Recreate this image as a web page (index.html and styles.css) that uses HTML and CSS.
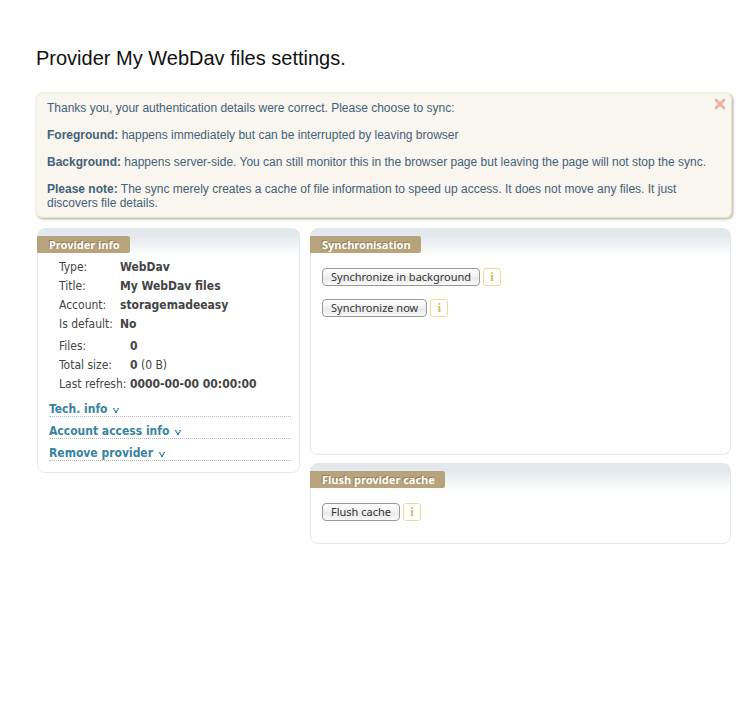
FILE: index.html
```html
<!DOCTYPE html>
<html lang="en">
<head>
    <meta charset="UTF-8">
    <meta name="viewport" content="width=device-width, initial-scale=1.0">
    <title>Provider settings</title>
    <link rel="stylesheet" href="styles.css">
</head>
<body>
    <h1>Provider My WebDav files settings.</h1>

    <div class="message">
        <button class="close" type="button" aria-label="Close">
            <svg width="12" height="12" viewBox="0 0 12 12"><path d="M2 2l8 8M10 2l-8 8" stroke="#ebada3" stroke-width="2.6" stroke-linecap="round"/></svg>
        </button>
        <p>Thanks you, your authentication details were correct. Please choose to sync:</p>
        <p><b>Foreground:</b> happens immediately but can be interrupted by leaving browser</p>
        <p><b>Background:</b> happens server-side. You can still monitor this in the browser page but leaving the page will not stop the sync.</p>
        <p><b>Please note:</b> The sync merely creates a cache of file information to speed up access. It does not move any files. It just discovers file details.</p>
    </div>

    <div class="columns">
        <div class="panel info">
            <h2>Provider info</h2>
            <table>
                <tr><th>Type:</th><td><b>WebDav</b></td></tr>
                <tr><th>Title:</th><td><b>My WebDav files</b></td></tr>
                <tr><th>Account:</th><td><b>storagemadeeasy</b></td></tr>
                <tr><th>Is default:</th><td><b>No</b></td></tr>
            </table>
            <table class="stats">
                <tr><th>Files:</th><td><b>0</b></td></tr>
                <tr><th>Total size:</th><td><b>0</b> (0 B)</td></tr>
                <tr><th>Last refresh:</th><td><b>0000-00-00 00:00:00</b></td></tr>
            </table>
            <ul class="more">
                <li><a href="#">Tech. info <svg class="arrow" width="6" height="5" viewBox="0 0 6 5"><path d="M0 0h1.6v1.6H0zM4.4 0H6v1.6H4.4zM1 1.8h1.4v1.4H1zM3.6 1.8H5v1.4H3.6zM2 3.1h2V5H2z"/></svg></a></li>
                <li><a href="#">Account access info <svg class="arrow" width="6" height="5" viewBox="0 0 6 5"><path d="M0 0h1.6v1.6H0zM4.4 0H6v1.6H4.4zM1 1.8h1.4v1.4H1zM3.6 1.8H5v1.4H3.6zM2 3.1h2V5H2z"/></svg></a></li>
                <li><a href="#">Remove provider <svg class="arrow" width="6" height="5" viewBox="0 0 6 5"><path d="M0 0h1.6v1.6H0zM4.4 0H6v1.6H4.4zM1 1.8h1.4v1.4H1zM3.6 1.8H5v1.4H3.6zM2 3.1h2V5H2z"/></svg></a></li>
            </ul>
        </div>

        <div class="actions">
            <div class="panel sync">
                <h2>Synchronisation</h2>
                <div class="row">
                    <button class="btn" type="button">Synchronize in background</button>
                    <a class="hint" href="#">i</a>
                </div>
                <div class="row">
                    <button class="btn" type="button">Synchronize now</button>
                    <a class="hint" href="#">i</a>
                </div>
            </div>
            <div class="panel flush">
                <h2>Flush provider cache</h2>
                <div class="row">
                    <button class="btn" type="button">Flush cache</button>
                    <a class="hint" href="#">i</a>
                </div>
            </div>
        </div>
    </div>
</body>
</html>
```
FILE: styles.css
```css
* {
    box-sizing: border-box;
}
body {
    margin: 0;
    padding: 46px 18px 20px 36px;
    background: #fff;
    color: #444;
    font-family: "DejaVu Sans Condensed", "DejaVu Sans", sans-serif;
    font-size: 12px;
}
h1 {
    margin: 0 0 23px;
    color: #111;
    font: 20px/24px "Liberation Sans", Arial, sans-serif;
}
.message {
    position: relative;
    padding: 7px 18px 7px 10px;
    border: 1px solid #f3efdc;
    border-right-color: #ece3b8;
    border-bottom-color: #ece3b8;
    border-radius: 6px;
    background: #f8f6ee;
    box-shadow: 1px 1px 3px rgba(0, 0, 0, 0.35);
    color: #456078;
    font: 12px/14px "Liberation Sans", Arial, sans-serif;
}
.message p {
    margin: 0 0 13px;
}
.message p:last-child {
    margin-bottom: 0;
}
.close {
    position: absolute;
    top: 4px;
    right: 5px;
    width: 12px;
    height: 12px;
    padding: 0;
    border: 0;
    background: none;
    cursor: pointer;
}
.close svg {
    display: block;
}
.columns {
    display: flex;
    align-items: flex-start;
    gap: 10px;
    margin-top: 10px;
    padding: 0 1px;
}
.panel {
    padding: 7px 8px 11px 11px;
    border: 1px solid #e2e9ea;
    border-radius: 8px;
    background: linear-gradient(#e2e8eb 6px, #fff 27px);
}
.panel h2 {
    width: fit-content;
    margin: 0 0 4px -12px;
    padding: 0 10px 0 12px;
    border-radius: 0 2px 2px 0;
    background: #b8a47c;
    color: #fff;
    font: bold 11px/17px "Noto Sans", sans-serif;
    text-shadow: -1px -1px 1px #93794a;
}
.info {
    flex: 0 0 263px;
}
.info table {
    margin-left: 10px;
    border-collapse: collapse;
}
.info th, .info td {
    height: 19px;
    padding: 0;
    font-weight: normal;
    line-height: 18px;
    text-align: left;
    white-space: nowrap;
}
.info th {
    width: 61px;
}
.info .stats {
    margin-top: 3px;
}
.info .stats th {
    width: 71px;
}
.more {
    margin: 2px 0 0;
    padding: 0;
    list-style: none;
}
.more li {
    height: 22px;
    padding-top: 7px;
    border-bottom: 1px dotted #bbb;
    line-height: 14px;
}
.more a {
    color: #38839f;
    font-weight: bold;
    text-decoration: none;
}
.arrow {
    margin-left: 2px;
    fill: #38839f;
}
.actions {
    flex: 1;
    display: flex;
    flex-direction: column;
    gap: 8px;
}
.sync {
    min-height: 227px;
}
.flush {
    min-height: 81px;
}
.actions h2 {
    margin-bottom: 15px;
}
.row {
    display: flex;
    align-items: center;
    gap: 3px;
    margin-bottom: 13px;
}
.flush .row {
    margin-bottom: 0;
}
.btn {
    height: 18px;
    padding: 0 8px;
    border: 1px solid #989898;
    border-radius: 4px;
    background: linear-gradient(#fff, #f0f0f0 50%, #e8e8e8 55%, #fafafa);
    color: #333;
    font: 11px/14px "Noto Sans", sans-serif;
}
.hint {
    width: 18px;
    height: 18px;
    border: 1px solid #ecdb98;
    border-radius: 3px;
    color: #d8bd55;
    font: bold 13px/16px "Liberation Serif", serif;
    text-align: center;
    text-decoration: none;
}
```
